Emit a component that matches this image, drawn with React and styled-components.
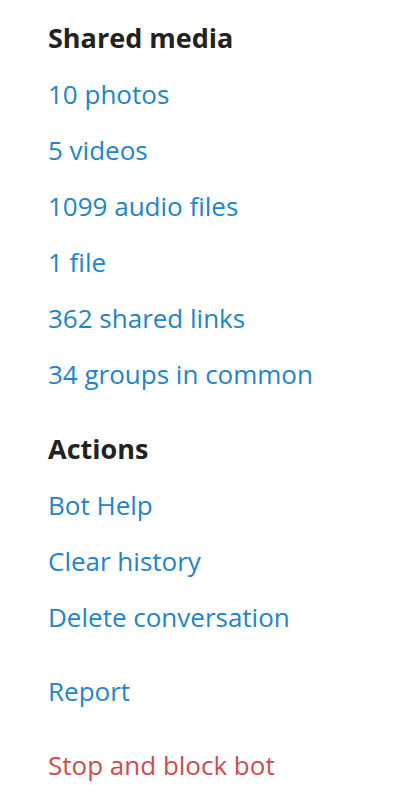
import React from "react";
import styled, { createGlobalStyle } from "styled-components";

const Global = createGlobalStyle`
  html, body { margin: 0; padding: 0; background: #ffffff; }
  body { font-family: "Open Sans", "Noto Sans", sans-serif; -webkit-font-smoothing: antialiased; }
`;

const Page = styled.div`
  display: flex;
  flex-direction: column;
  padding: 10px 0 0 48px;
  width: 408px;
  box-sizing: border-box;
`;

const Section = styled.section`
  display: flex;
  flex-direction: column;
  margin-bottom: ${(p) => p.$gap || 0}px;
`;

const Title = styled.h2`
  margin: 0;
  height: 56px;
  line-height: 56px;
  font-size: 27px;
  font-weight: 700;
  color: #222222;
`;

const Link = styled.a`
  display: block;
  height: 56px;
  line-height: 56px;
  font-size: 26px;
  font-weight: 400;
  color: ${(p) => (p.$danger ? "#cf4c4c" : "#2085cc")};
  text-decoration: none;
  cursor: pointer;
  margin-top: ${(p) => p.$offset || 0}px;
`;

export default function App() {
  return (
    <>
      <Global />
      <Page>
        <Section $gap={19}>
          <Title>Shared media</Title>
          <Link>10 photos</Link>
          <Link>5 videos</Link>
          <Link>1099 audio files</Link>
          <Link>1 file</Link>
          <Link>362 shared links</Link>
          <Link>34 groups in common</Link>
        </Section>
        <Section>
          <Title>Actions</Title>
          <Link>Bot Help</Link>
          <Link>Clear history</Link>
          <Link>Delete conversation</Link>
          <Link $offset={18}>Report</Link>
          <Link $offset={18} $danger>Stop and block bot</Link>
        </Section>
      </Page>
    </>
  );
}
